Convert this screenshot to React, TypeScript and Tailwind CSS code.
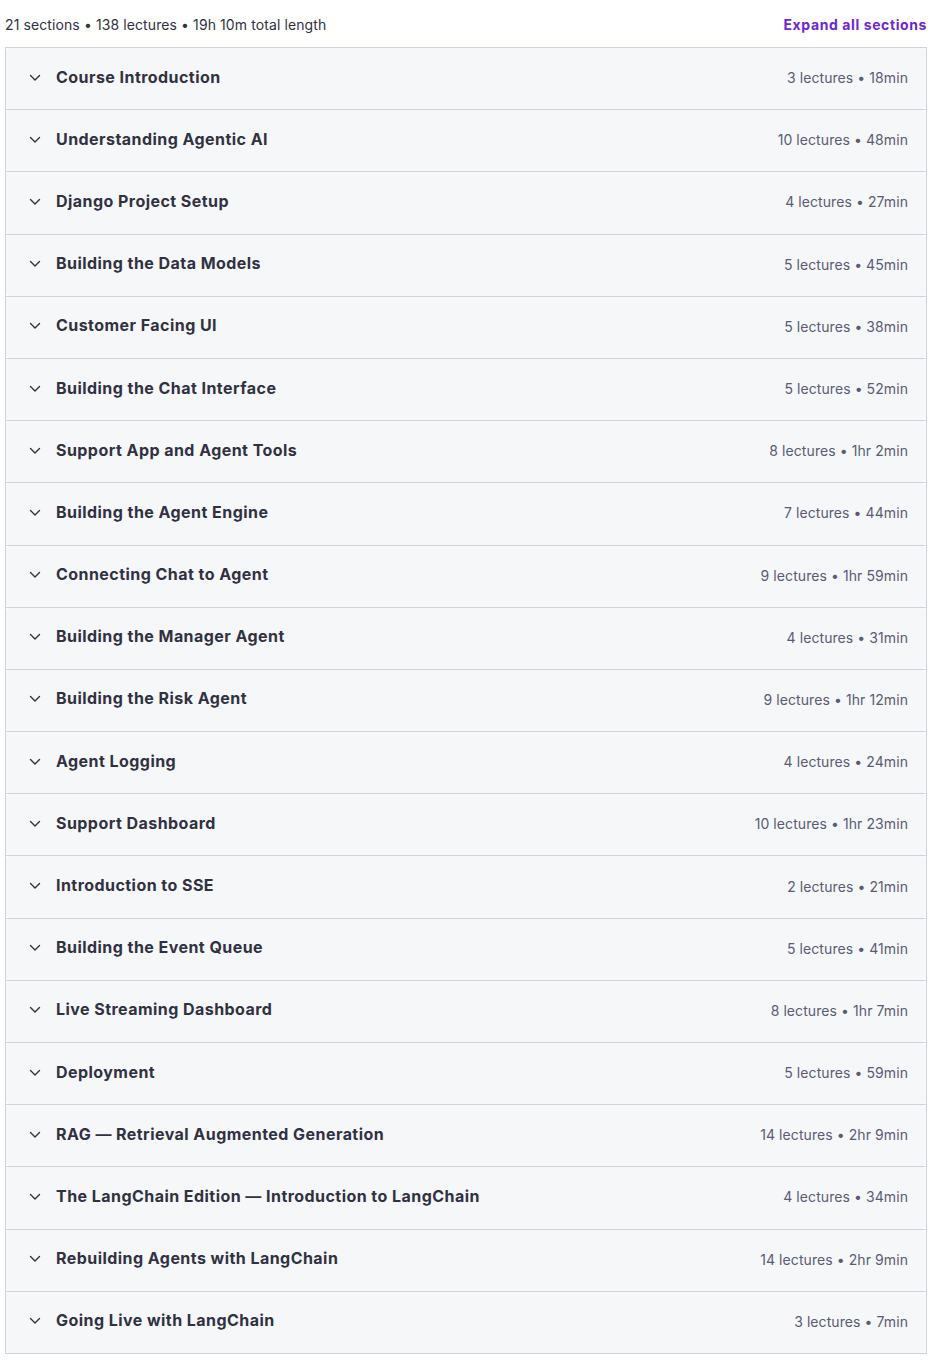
import React from "react";

const sections: [string, string][] = [
  ["Course Introduction", "3 lectures • 18min"],
  ["Understanding Agentic AI", "10 lectures • 48min"],
  ["Django Project Setup", "4 lectures • 27min"],
  ["Building the Data Models", "5 lectures • 45min"],
  ["Customer Facing UI", "5 lectures • 38min"],
  ["Building the Chat Interface", "5 lectures • 52min"],
  ["Support App and Agent Tools", "8 lectures • 1hr 2min"],
  ["Building the Agent Engine", "7 lectures • 44min"],
  ["Connecting Chat to Agent", "9 lectures • 1hr 59min"],
  ["Building the Manager Agent", "4 lectures • 31min"],
  ["Building the Risk Agent", "9 lectures • 1hr 12min"],
  ["Agent Logging", "4 lectures • 24min"],
  ["Support Dashboard", "10 lectures • 1hr 23min"],
  ["Introduction to SSE", "2 lectures • 21min"],
  ["Building the Event Queue", "5 lectures • 41min"],
  ["Live Streaming Dashboard", "8 lectures • 1hr 7min"],
  ["Deployment", "5 lectures • 59min"],
  ["RAG — Retrieval Augmented Generation", "14 lectures • 2hr 9min"],
  ["The LangChain Edition — Introduction to LangChain", "4 lectures • 34min"],
  ["Rebuilding Agents with LangChain", "14 lectures • 2hr 9min"],
  ["Going Live with LangChain", "3 lectures • 7min"],
];

function Chevron() {
  return (
    <svg width="12" height="8" viewBox="0 0 12 8" fill="none" className="shrink-0">
      <path d="M1.5 1.5 L6 6 L10.5 1.5" stroke="#303141" strokeWidth="1.4" strokeLinecap="round" strokeLinejoin="round" />
    </svg>
  );
}

export default function App() {
  return (
    <div className="bg-white w-[932px] min-h-[1360px] pl-[5px] pr-[5px]" style={{ fontFamily: "Inter, 'Noto Sans', sans-serif" }}>
      <div className="flex items-center justify-between h-[47px] pt-[2px]">
        <span className="text-[14px] text-[#303141] tracking-[0.1px]">21 sections • 138 lectures • 19h 10m total length</span>
        <span className="text-[14px] font-bold text-[#6d28d2] tracking-[0.6px]">Expand all sections</span>
      </div>
      <div className="w-[922px] border-x border-b border-[#d1d2e0]">
        {sections.map(([title, meta], i) => (
          <div key={i} className="h-[62.2px] border-t border-[#d1d2e0] bg-white">
            <div className="h-full bg-[#f6f7f9] rounded-[4px] flex items-center pl-[23px] pr-[18px] pb-[2px]">
              <Chevron />
              <span className="ml-[15px] text-[16px] font-bold text-[#303141] tracking-[0.45px] flex-1 -mt-[2px]">{title}</span>
              <span className="text-[14px] text-[#595c73] tracking-[0.08px]">{meta}</span>
            </div>
          </div>
        ))}
      </div>
    </div>
  );
}
